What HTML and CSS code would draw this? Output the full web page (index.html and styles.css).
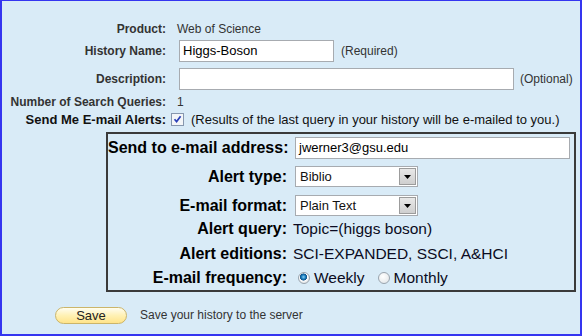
FILE: index.html
```html
<!DOCTYPE html>
<html>
<head>
<meta charset="utf-8">
<link rel="stylesheet" href="styles.css">
</head>
<body>
<div class="page">
  <div class="row r1">
    <div class="lbl">Product:</div>
    <div class="val">Web of Science</div>
  </div>
  <div class="row r2">
    <div class="lbl">History Name:</div>
    <div class="val"><span class="field f-name">Higgs-Boson</span><span class="note">(Required)</span></div>
  </div>
  <div class="row r3">
    <div class="lbl">Description:</div>
    <div class="val"><span class="field f-desc"></span><span class="note note2">(Optional)</span></div>
  </div>
  <div class="row r4">
    <div class="lbl">Number of Search Queries:</div>
    <div class="val">1</div>
  </div>
  <div class="row r5">
    <div class="lbl lbl-big">Send Me E-mail Alerts:</div>
    <div class="val val-big">
      <span class="check"><svg width="13" height="13" viewBox="0 0 13 13"><rect x="0.5" y="0.5" width="12" height="12" fill="#f4f6f8" stroke="#8797ae"/><path d="M3.5 6.2 L5.6 8.6 L9.6 3.2" fill="none" stroke="#2a3fb8" stroke-width="1.7"/></svg></span>
      <span class="results">(Results of the last query in your history will be e-mailed to you.)</span>
    </div>
  </div>

  <div class="box">
    <div class="brow b1">
      <div class="blbl">Send to e-mail address:</div>
      <div class="bval"><span class="field f-mail">jwerner3@gsu.edu</span></div>
    </div>
    <div class="brow b2">
      <div class="blbl">Alert type:</div>
      <div class="bval"><span class="select"><span class="opt">Biblio</span><span class="arrow"><svg width="7" height="4" viewBox="0 0 7 4"><path d="M0 0 H7 L3.5 4 Z" fill="#000"/></svg></span></span></div>
    </div>
    <div class="brow b3">
      <div class="blbl">E-mail format:</div>
      <div class="bval"><span class="select"><span class="opt">Plain Text</span><span class="arrow"><svg width="7" height="4" viewBox="0 0 7 4"><path d="M0 0 H7 L3.5 4 Z" fill="#000"/></svg></span></span></div>
    </div>
    <div class="brow b4">
      <div class="blbl">Alert query:</div>
      <div class="bval txt">Topic=(higgs boson)</div>
    </div>
    <div class="brow b5">
      <div class="blbl">Alert editions:</div>
      <div class="bval txt">SCI-EXPANDED, SSCI, A&amp;HCI</div>
    </div>
    <div class="brow b6">
      <div class="blbl">E-mail frequency:</div>
      <div class="bval txt">
        <span class="radio on"></span><span class="rtxt">Weekly</span>
        <span class="radio"></span><span class="rtxt">Monthly</span>
      </div>
    </div>
  </div>

  <div class="saverow">
    <span class="savebtn">Save</span>
    <span class="savetxt">Save your history to the server</span>
  </div>
</div>
</body>
</html>
```

FILE: styles.css
```css
html, body {
  margin: 0;
  padding: 0;
}
body {
  width: 582px;
  height: 336px;
  overflow: hidden;
  font-family: "Liberation Sans", Arial, sans-serif;
}
.page {
  box-sizing: border-box;
  width: 582px;
  height: 336px;
  border: 2px solid #3535f0;
  border-top-width: 1px;
  background: #d9ebf7;
  display: flex;
  flex-direction: column;
}
.row {
  display: flex;
  align-items: center;
  font-size: 12px;
  color: #333;
}
.lbl {
  width: 164px;
  text-align: right;
  font-weight: bold;
  color: #333;
  flex: none;
}
.val {
  margin-left: 11px;
  display: flex;
  align-items: center;
  white-space: nowrap;
}
.r1 { margin-top: 19px; height: 18px; }
.r2 { margin-top: 2px; height: 22px; }
.r3 { margin-top: 6px; height: 22px; }
.r4 { margin-top: 4px; height: 16px; }
.r5 { margin-top: 1px; height: 16px; }

.field {
  box-sizing: border-box;
  display: inline-block;
  height: 22px;
  line-height: 20px;
  background: #fff;
  border: 1px solid #a7abb0;
  font-size: 13px;
  color: #000;
  padding-left: 3px;
}
.f-name { width: 155px; margin-left: 2px; }
.f-desc { width: 335px; margin-left: 2px; }
.note { margin-left: 7px; font-size: 12px; color: #333; }
.note2 { margin-left: 6px; }

.lbl-big { font-size: 13px; color: #111; }
.val-big { margin-left: 5px; font-size: 13px; color: #111; }
.check { display: inline-flex; width: 13px; height: 13px; }
.results { margin-left: 7px; }

.box {
  box-sizing: border-box;
  margin-top: 5px;
  margin-left: 104px;
  width: 470px;
  height: 160px;
  border: 2px solid #3a3a3a;
  display: flex;
  flex-direction: column;
}
.brow {
  display: flex;
  align-items: center;
}
.blbl {
  width: 179px;
  flex: none;
  text-align: right;
  font-weight: bold;
  font-size: 16px;
  color: #000;
  white-space: nowrap;
}
.bval {
  margin-left: 8px;
  display: flex;
  align-items: center;
  white-space: nowrap;
}
.txt { font-size: 15.5px; color: #0b0b22; margin-left: 6px; }
.b1 { margin-top: 3px; height: 21px; }
.b2 { margin-top: 8px; height: 21px; }
.b3 { margin-top: 8px; height: 21px; }
.b4 { margin-top: 3px; height: 20px; }
.b5 { margin-top: 5px; height: 20px; }
.b6 { margin-top: 4px; height: 20px; }
.f-mail { width: 275px; height: 22px; font-size: 13px; }

.select {
  box-sizing: border-box;
  width: 123px;
  height: 21px;
  background: #fff;
  border: 1px solid #a7abb0;
  display: flex;
  align-items: center;
  justify-content: space-between;
  font-size: 13px;
  color: #111;
}
.opt { padding-left: 4px; }
.arrow {
  box-sizing: border-box;
  width: 17px;
  height: 17px;
  margin-right: 1px;
  background: linear-gradient(#e8e8e8, #cfcfcf);
  border: 1px solid #9c9c9c;
  display: flex;
  align-items: center;
  justify-content: center;
}

.radio {
  box-sizing: border-box;
  display: inline-block;
  width: 12px;
  height: 12px;
  border-radius: 50%;
  border: 1px solid #9aa4ae;
  background: radial-gradient(circle at 40% 35%, #ffffff, #dfe3e6);
  margin-left: 5px;
  flex: none;
}
.radio.on {
  background: radial-gradient(circle at 45% 40%, #8fd0f2 0, #1b7fc0 2px, #0f4f86 3.3px, #ffffff 3.8px, #dfe3e6 6px);
}
.rtxt { margin-left: 4px; }
.rtxt + .radio { margin-left: 13px; }

.saverow {
  margin-top: 13px;
  height: 20px;
  display: flex;
  align-items: center;
  margin-left: 53px;
}
.savebtn {
  box-sizing: border-box;
  width: 72px;
  height: 17px;
  border-radius: 9px;
  border: 1px solid #cbb56a;
  background: linear-gradient(#fffdf0, #fff1b4 50%, #ffe48a);
  font-size: 13px;
  color: #222;
  text-align: center;
  line-height: 15px;
}
.savetxt {
  margin-left: 13px;
  font-size: 12px;
  color: #333;
}
```
